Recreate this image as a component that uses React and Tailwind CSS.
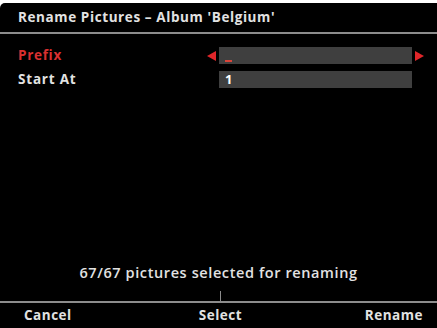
export default function App() {
  return (
    <div className="w-[437px] h-[328px] bg-white pt-[3px] overflow-hidden" style={{ fontFamily: '"Open Sans", "DejaVu Sans", sans-serif' }}>
      <div className="h-[325px] bg-black rounded-tl-[5px] flex flex-col text-[#e2e2e2]">
        {/* title */}
        <div className="h-[29px] flex items-center pl-[18px] text-[13.5px] font-bold tracking-[0.6px]">
          Rename Pictures – Album 'Belgium'
        </div>
        <div className="h-[2px] bg-[#8c8c8c]" />

        {/* fields */}
        <div className="pt-[13px] pl-[18px] grid grid-cols-[189px_12px_193px_12px] gap-y-[7px] items-center">
          <div className="text-[13.5px] font-bold tracking-[0.7px] text-[#d93030] leading-[17px]">Prefix</div>
          <div className="flex items-center">
            <svg width="9" height="10" viewBox="0 0 9 10">
              <path d="M0 5 L9 0 L9 10 Z" fill="#e0262a" />
            </svg>
          </div>
          <div className="h-[17px] bg-[#3f3f3f] flex items-end pl-[6px] pb-[2px]">
            <div className="w-[7px] h-[2px] bg-[#d9453a]" />
          </div>
          <div className="flex items-center justify-end">
            <svg width="9" height="10" viewBox="0 0 9 10">
              <path d="M9 5 L0 0 L0 10 Z" fill="#e0262a" />
            </svg>
          </div>

          <div className="text-[13.5px] font-bold tracking-[0.8px] leading-[17px]">Start At</div>
          <div />
          <div className="h-[17px] bg-[#3f3f3f] flex items-center pl-[6px] text-[13px] font-bold leading-none text-white">1</div>
          <div />
        </div>

        <div className="flex-1" />

        {/* status */}
        <div className="h-[18px] flex items-center justify-center text-[14.5px] font-semibold tracking-[0.6px]">
          67/67 pictures selected for renaming
        </div>
        <div className="h-[9px]" />
        <div className="h-[10px] flex pl-[220px]">
          <div className="w-[1px] bg-[#8c8c8c]" />
        </div>
        <div className="h-[2px] bg-[#8c8c8c]" />

        {/* soft keys */}
        <div className="h-[25px] grid grid-cols-3 items-center text-[13.5px] font-bold tracking-[0.5px]">
          <div className="pl-[24px]">Cancel</div>
          <div className="text-center pl-[4px]">Select</div>
          <div className="text-right pr-[14px]">Rename</div>
        </div>
      </div>
    </div>
  );
}
